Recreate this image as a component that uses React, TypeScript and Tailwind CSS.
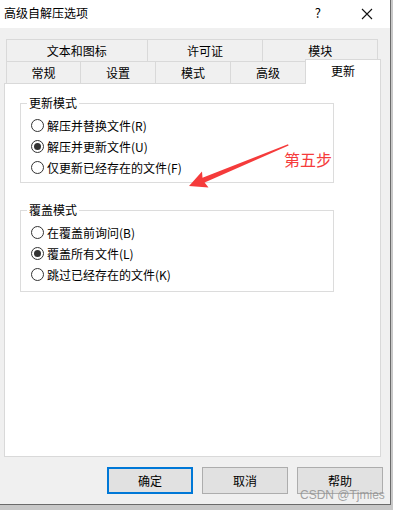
import React from "react";

const font = { fontFamily: '"Noto Sans CJK SC", "Noto Sans", sans-serif' };

function Radio({ label, checked }: { label: string; checked?: boolean }) {
  return (
    <div className="flex items-center h-[21px]">
      <div className="w-[13px] h-[13px] rounded-full border border-[#333333] bg-white flex items-center justify-center shrink-0">
        {checked && <div className="w-[7px] h-[7px] rounded-full bg-[#333333]" />}
      </div>
      <span className="ml-[3px] text-[12px] leading-[16px] text-black whitespace-nowrap">{label}</span>
    </div>
  );
}

function Group({ title, items, pb }: { title: string; items: { label: string; checked?: boolean }[]; pb: string }) {
  return (
    <fieldset className={`w-[314px] border border-[#dcdcdc] ${pb}`}>
      <legend className="ml-[6px] px-[2px] text-[12px] leading-[16px] text-black">{title}</legend>
      <div className="pl-[10px] pt-[4px] flex flex-col">
        {items.map((it) => (
          <Radio key={it.label} label={it.label} checked={it.checked} />
        ))}
      </div>
    </fieldset>
  );
}

function Tab({ label, w, noRight }: { label: string; w: string; noRight?: boolean }) {
  return (
    <div
      className={`${w} h-full border-t ${noRight ? "" : "border-r"} border-[#d9d9d9] bg-[#f0f0f0] flex items-center justify-center text-[12px] leading-[16px] text-black`}
    >
      {label}
    </div>
  );
}

function Button({ label, primary }: { label: string; primary?: boolean }) {
  return (
    <div
      className={`w-[86px] h-[27px] bg-[#e1e1e1] flex items-center justify-center text-[12px] leading-[16px] text-black ${
        primary ? "border-2 border-[#0078d7]" : "border border-[#adadad]"
      }`}
    >
      {label}
    </div>
  );
}

export default function App() {
  return (
    <div className="w-[393px] h-[510px] bg-[#c8c8c8] relative overflow-hidden" style={font}>
      <div className="w-[391px] h-[505px] bg-[#f0f0f0] border-r border-b border-[#6b6b6b] flex flex-col">
        {/* Title bar */}
        <div className="h-[28px] bg-white flex items-center pl-[4px] pb-[3px] shrink-0">
          <span className="text-[12px] leading-[16px] text-black">高级自解压选项</span>
          <span className="ml-auto text-[13px] leading-[16px] text-black mr-[40px]">?</span>
          <svg width="12" height="12" viewBox="0 0 12 12" className="mr-[17px] mt-[2px]">
            <path d="M1 1 L11 11 M11 1 L1 11" stroke="#111" strokeWidth="1.1" />
          </svg>
        </div>

        {/* Body */}
        <div className="flex flex-col px-[4px]">
          {/* Tabs */}
          <div className="mt-[11px] ml-[2px] flex h-[22px] border-l border-[#d9d9d9] w-[372px]">
            <Tab label="文本和图标" w="w-[141px]" />
            <Tab label="许可证" w="w-[116px]" />
            <Tab label="模块" w="w-[115px]" />
          </div>
          <div className="ml-[2px] flex items-end h-[22px]">
            <div className="flex h-[22px] border-l border-[#d9d9d9]">
              <Tab label="常规" w="w-[74px]" />
              <Tab label="设置" w="w-[75px]" />
              <Tab label="模式" w="w-[75px]" />
              <Tab label="高级" w="w-[74px]" noRight />
            </div>
            <div className="relative z-10 w-[76px] h-[25px] -mb-px bg-white border-t border-l border-r border-[#d9d9d9] flex items-center justify-center text-[12px] leading-[16px] text-black pb-[3px]">
              更新
            </div>
          </div>

          {/* Panel */}
          <div className="w-[377px] h-[374px] bg-white border border-[#d9d9d9] flex flex-col px-[15px]">
            <div className="mt-[11px]">
              <Group
                title="更新模式"
                pb="pb-[4px]"
                items={[
                  { label: "解压并替换文件(R)" },
                  { label: "解压并更新文件(U)", checked: true },
                  { label: "仅更新已经存在的文件(F)" },
                ]}
              />
            </div>
            <div className="mt-[19px]">
              <Group
                title="覆盖模式"
                pb="pb-[6px]"
                items={[
                  { label: "在覆盖前询问(B)" },
                  { label: "覆盖所有文件(L)", checked: true },
                  { label: "跳过已经存在的文件(K)" },
                ]}
              />
            </div>
          </div>

          {/* Buttons */}
          <div className="mt-[10px] flex justify-end gap-[9px] pr-[3px]">
            <Button label="确定" primary />
            <Button label="取消" />
            <Button label="帮助" />
          </div>
        </div>
      </div>

      {/* Annotation arrow */}
      <svg className="absolute left-0 top-0 pointer-events-none" width="393" height="510">
        <polygon
          points="189,186 202,171.5 202.5,177.8 288,144.3 288.6,145.6 204.6,182.6 208.5,187.5"
          fill="#f53b3b"
        />
      </svg>
      <span className="absolute left-[284px] top-[148px] text-[16px] leading-[22px] text-[#f53b3b] whitespace-nowrap">
        第五步
      </span>

      {/* Watermark */}
      <span
        className="absolute left-[300px] top-[487px] text-[12px] leading-[16px] text-[#8c8c8c]/80 whitespace-nowrap"
        style={{ fontFamily: '"Liberation Sans", Arial, sans-serif' }}
      >
        CSDN @Tjmies
      </span>
    </div>
  );
}
